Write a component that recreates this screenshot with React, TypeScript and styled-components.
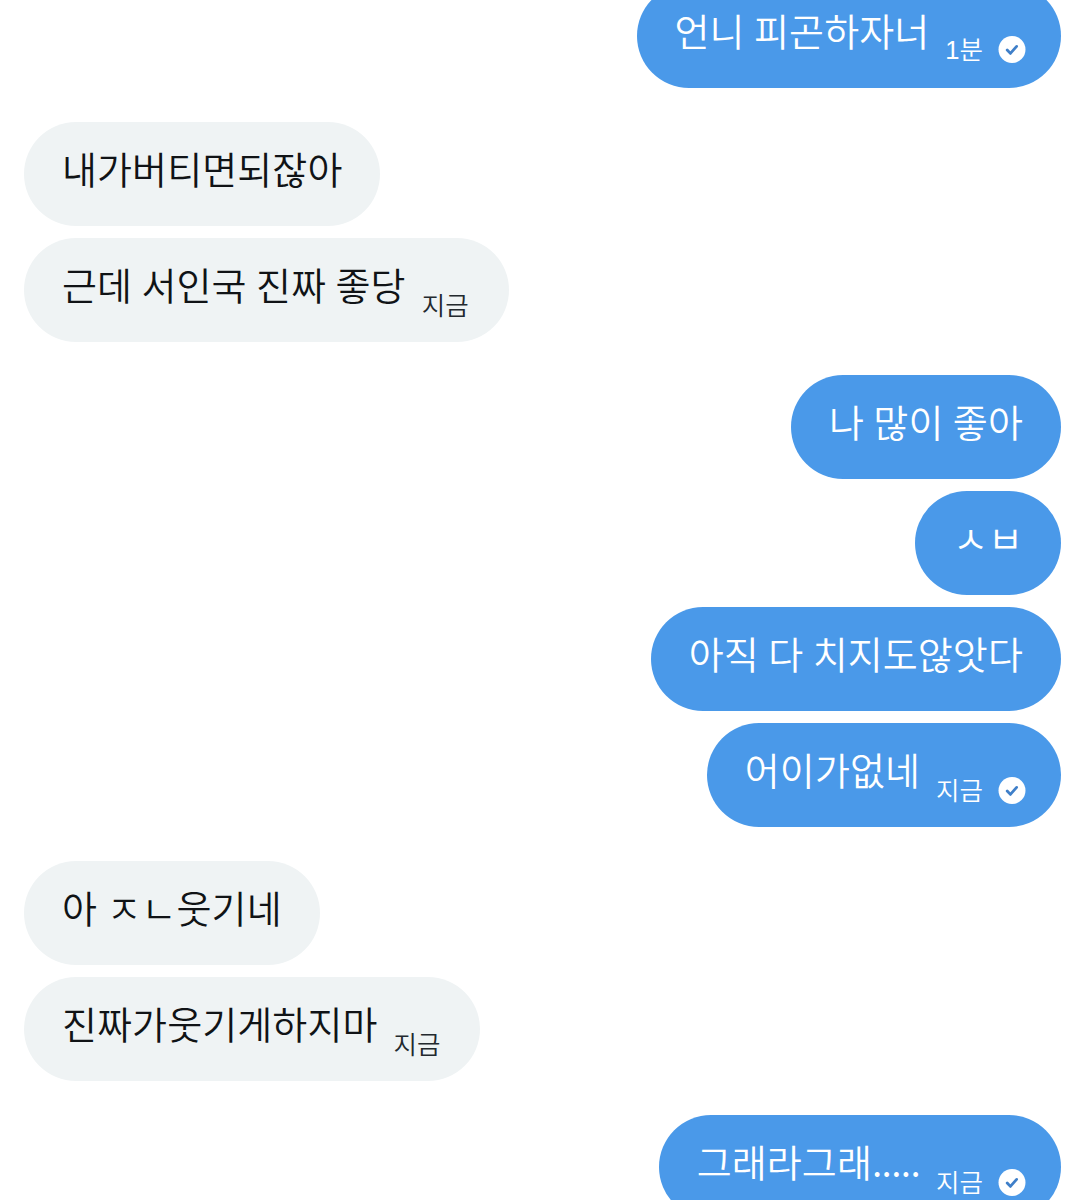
import React from 'react'
import styled, { createGlobalStyle } from 'styled-components'

const GlobalStyle = createGlobalStyle`
  html, body {
    margin: 0;
    padding: 0;
    background: #ffffff;
  }
  body {
    font-family: 'Noto Sans CJK KR', 'Noto Sans', sans-serif;
  }
`

const Thread = styled.div`
  width: 1085px;
  height: 1200px;
  overflow: hidden;
  box-sizing: border-box;
  padding: 0 24px;
  display: flex;
  flex-direction: column;
`

const Group = styled.div<{ $mine?: boolean; $gapTop?: number }>`
  display: flex;
  flex-direction: column;
  gap: 12px;
  flex: none;
  align-items: ${({ $mine }) => ($mine ? 'flex-end' : 'flex-start')};
  margin-top: ${({ $gapTop }) => $gapTop ?? 0}px;
`

const Bubble = styled.div<{ $mine?: boolean }>`
  height: 104px;
  flex: none;
  box-sizing: border-box;
  border-radius: 52px;
  padding: 0 38px;
  display: flex;
  align-items: center;
  background: ${({ $mine }) => ($mine ? '#4a99e9' : '#eff3f4')};
  color: ${({ $mine }) => ($mine ? '#ffffff' : '#101316')};
`

const Text = styled.span`
  font-size: 38px;
  font-weight: 350;
  line-height: 52px;
  letter-spacing: 0.1px;
  word-spacing: 0.8px;
  white-space: pre;
  margin-top: -12px;
`

const Dots = styled.span`
  letter-spacing: -0.6px;
`

const Meta = styled.span<{ $mine?: boolean; $top?: number }>`
  display: flex;
  align-items: center;
  gap: 15px;
  margin-left: 16px;
  margin-right: ${({ $mine }) => ($mine ? '-3px' : '2px')};
  margin-top: ${({ $top }) => $top ?? 31}px;
  font-family: 'Liberation Sans', 'Noto Sans CJK KR', sans-serif;
  font-size: 25.5px;
  font-weight: 350;
  line-height: 30px;
  color: ${({ $mine }) => ($mine ? '#ffffff' : '#23292e')};
`

const Check = () => (
  <svg width="28" height="28" viewBox="0 0 28 28">
    <circle cx="14" cy="13.5" r="13.5" fill="#ffffff" />
    <path d="M9.2 14l3.2 3.4 6.2-7" fill="none" stroke="#3f7fc9" strokeWidth="2.8" strokeLinecap="round" strokeLinejoin="round" />
  </svg>
)

export default function App() {
  return (
    <>
      <GlobalStyle />
      <Thread>
        <Group $mine $gapTop={-16}>
          <Bubble $mine>
            <Text>언니 피곤하자너</Text>
            <Meta $mine $top={28}>1분<Check /></Meta>
          </Bubble>
        </Group>
        <Group $gapTop={34}>
          <Bubble><Text>내가버티면되잖아</Text></Bubble>
          <Bubble>
            <Text>근데 서인국 진짜 좋당</Text>
            <Meta>지금</Meta>
          </Bubble>
        </Group>
        <Group $mine $gapTop={33}>
          <Bubble $mine><Text>나 많이 좋아</Text></Bubble>
          <Bubble $mine><Text>ㅅㅂ</Text></Bubble>
          <Bubble $mine><Text>아직 다 치지도않앗다</Text></Bubble>
          <Bubble $mine>
            <Text>어이가없네</Text>
            <Meta $mine>지금<Check /></Meta>
          </Bubble>
        </Group>
        <Group $gapTop={34}>
          <Bubble><Text>아 ㅈㄴ웃기네</Text></Bubble>
          <Bubble>
            <Text>진짜가웃기게하지마</Text>
            <Meta>지금</Meta>
          </Bubble>
        </Group>
        <Group $mine $gapTop={34}>
          <Bubble $mine>
            <Text>그래라그래<Dots>.....</Dots></Text>
            <Meta $mine>지금<Check /></Meta>
          </Bubble>
        </Group>
      </Thread>
    </>
  )
}
